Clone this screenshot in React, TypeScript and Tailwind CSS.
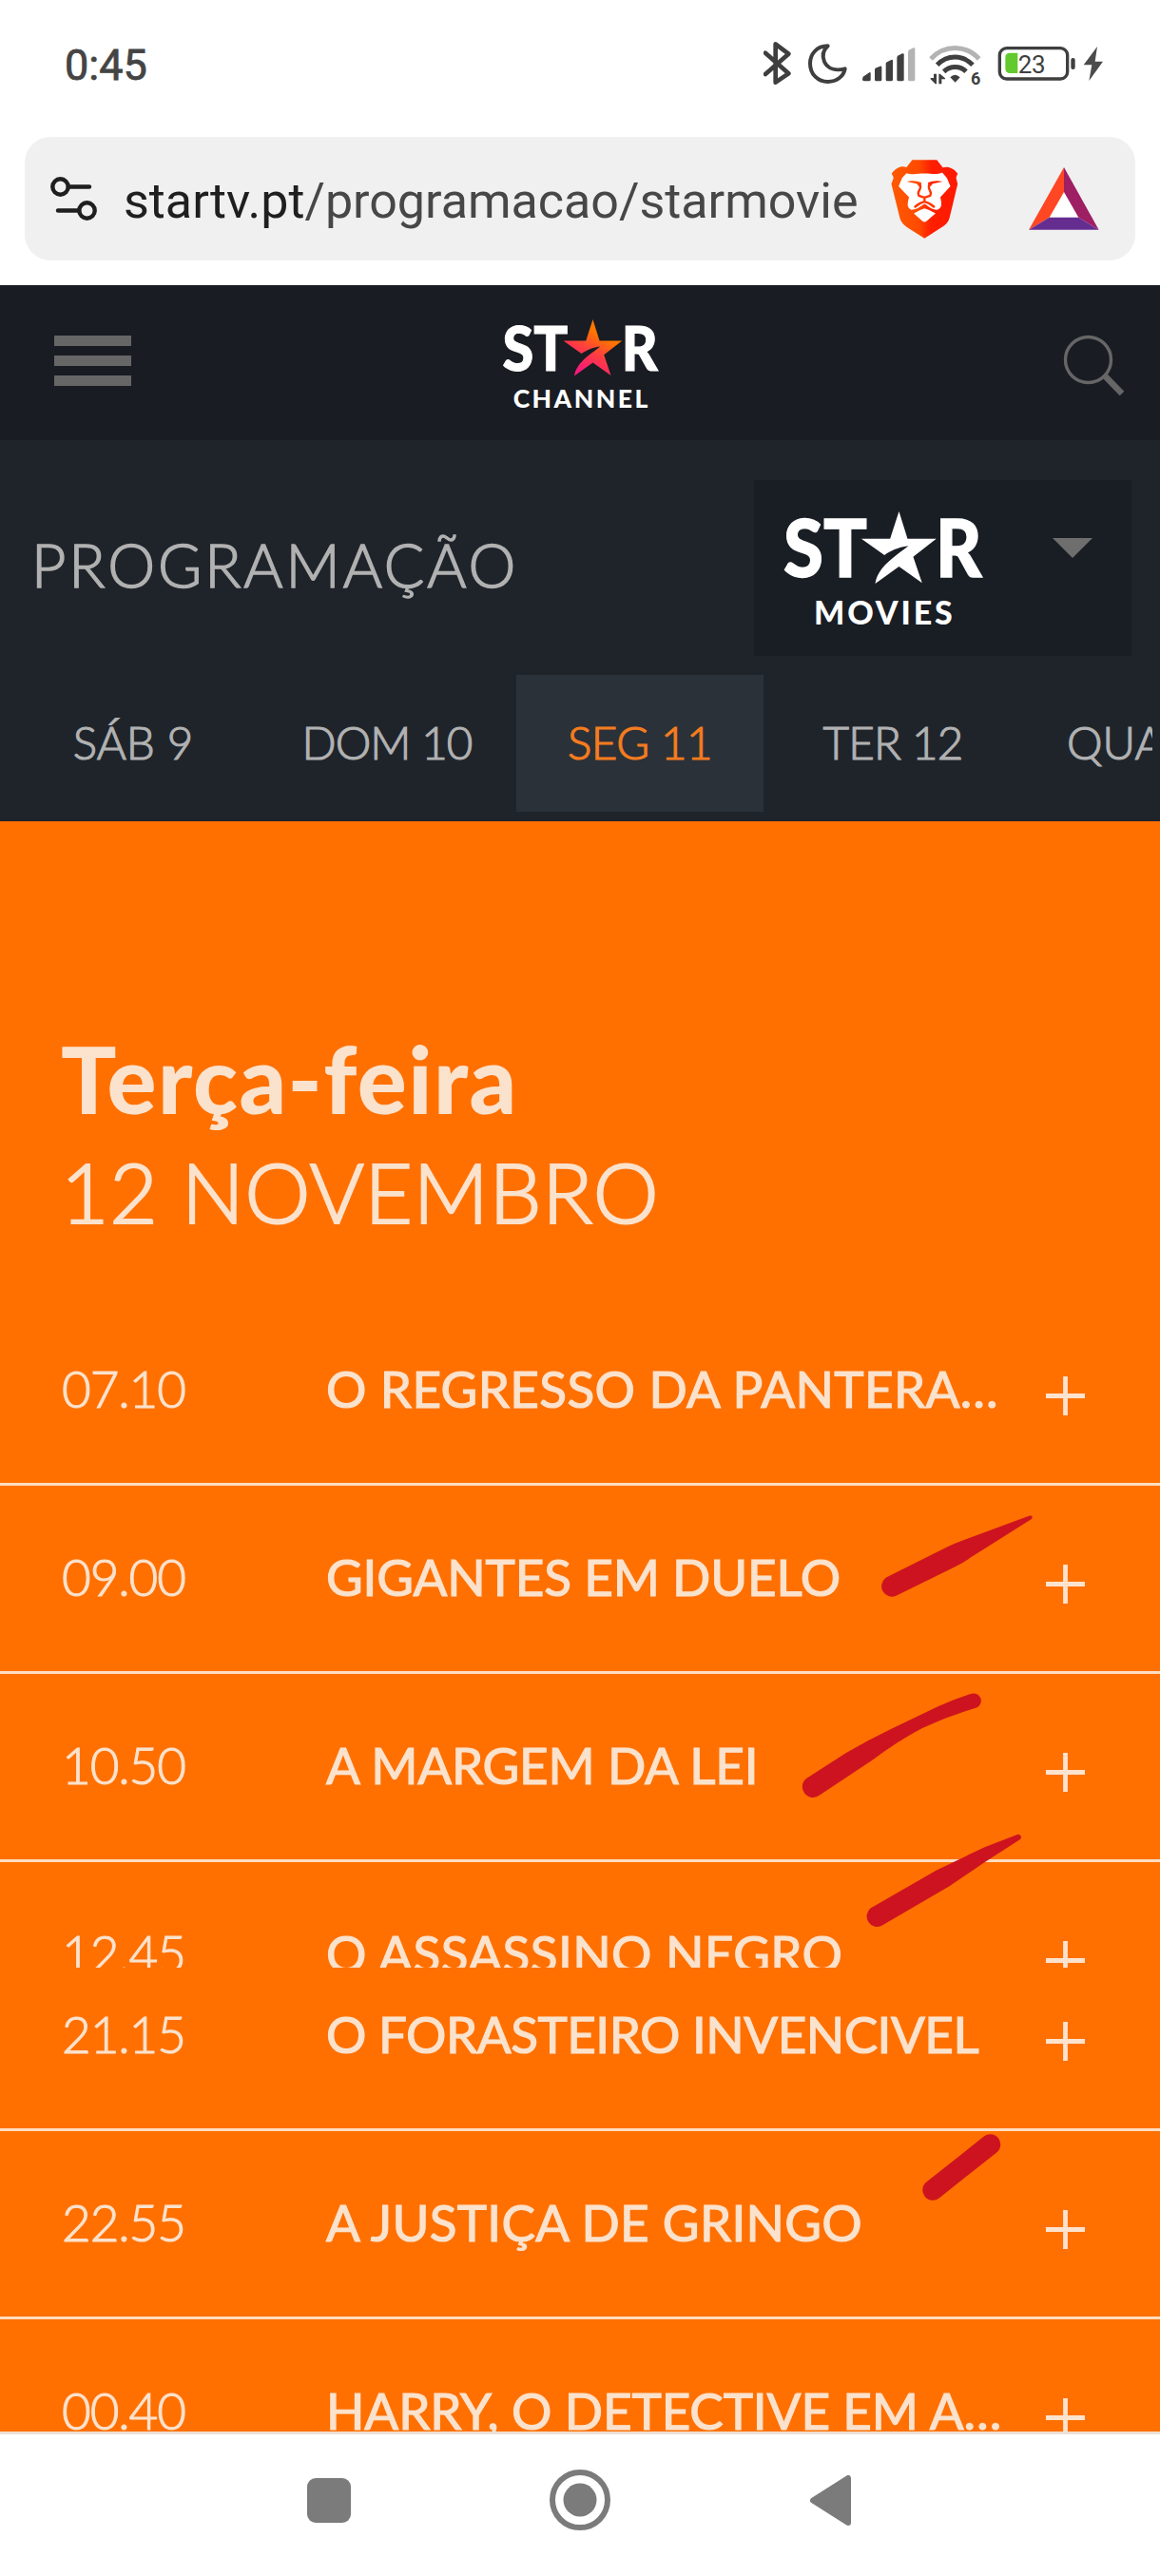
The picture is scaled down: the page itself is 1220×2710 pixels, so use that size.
import React from "react";

interface Day {
  label: string;
  className: string;
  active?: boolean;
}

interface Show {
  time: string;
  title: string;
  className: string;
}

const days: Day[] = [
  { label: "SÁB 9", className: "w-[240px] justify-center" },
  { label: "DOM 10", className: "ml-[11px] w-[272px] justify-center tracking-[-1px]" },
  { label: "SEG 11", className: "w-[260px] justify-center tracking-[-0.5px]", active: true },
  { label: "TER 12", className: "w-[272px] justify-center tracking-[-0.8px]" },
  { label: "QUA", className: "w-[137px] pl-[47px]" },
];

const morningShows: Show[] = [
  { time: "07.10", title: "O REGRESSO DA PANTERA…", className: "tracking-[0.4px]" },
  { time: "09.00", title: "GIGANTES EM DUELO", className: "tracking-[-0.15px]" },
  { time: "10.50", title: "A MARGEM DA LEI", className: "tracking-[-0.2px]" },
  { time: "12.45", title: "O ASSASSINO NEGRO", className: "tracking-[0.45px]" },
];

const nightShows: Show[] = [
  { time: "21.15", title: "O FORASTEIRO INVENCIVEL", className: "tracking-[-0.5px]" },
  { time: "22.55", title: "A JUSTIÇA DE GRINGO", className: "tracking-[0.3px]" },
  { time: "00.40", title: "HARRY, O DETECTIVE EM A…", className: "tracking-[-0.1px]" },
];

function StatusBar() {
  return (
    <div className="flex h-[144px] items-start justify-between pl-[68px] pr-[59px] text-[#444]">
      <span className="mt-[42px] font-['Roboto'] text-[45px] leading-[53px] [-webkit-text-stroke:0.8px]">
        0:45
      </span>

      <div className="mt-[44px] flex items-start">
        {/* Bluetooth */}
        <svg className="h-[45px] w-[29px]" viewBox="70 72 87 135" fill="none" stroke="#3f3f3f" strokeWidth="14" strokeLinejoin="round" strokeLinecap="round">
          <path d="M76 107 L149 172 L108 200 V79 L149 110 L76 174" />
        </svg>

        {/* Do not disturb */}
        <svg className="mt-[2px] ml-[18px] h-[42px] w-[41px]" viewBox="210 78 123 126" fill="none" stroke="#3f3f3f" strokeWidth="12" strokeLinejoin="round">
          <path d="M272 85 C236 85 216 112 216 140 C216 175 241 198 272 198 C301 198 322 180 326 157 C298 164 272 158 261 135 C253 116 258 98 272 85 Z" />
        </svg>

        {/* Signal */}
        <svg className="mt-[6px] ml-[16px] h-[36px] w-[56px]" viewBox="382 90 168 108" fill="#3f3f3f">
          <path d="M384 182 L405 168 Q408 168 408 171 V191 Q408 196 403 196 H387 Q382 196 382 190 Z" />
          <path d="M421 160 Q421 156 426 154 L438 149 Q443 148 443 153 V191 Q443 196 438 196 H426 Q421 196 421 191 Z" />
          <path d="M456 141 Q456 137 461 135 L473 129 Q478 127 478 132 V191 Q478 196 473 196 H461 Q456 196 456 191 Z" />
          <path d="M491 122 Q491 118 496 115 L508 109 Q513 107 513 112 V191 Q513 196 508 196 H496 Q491 196 491 191 Z" />
          <path fill="#b3b3b3" d="M526 104 Q526 100 531 97 L543 91 Q548 89 548 94 V191 Q548 196 543 196 H531 Q526 196 526 191 Z" />
        </svg>

        {/* Wifi */}
        <svg className="mt-[3px] ml-[14px] h-[42px] w-[56px] overflow-visible" viewBox="592 81 168 126" fill="none" strokeWidth="15">
          <path stroke="#b3b3b3" d="M598 126 C640 80 708 80 750 126" />
          <path stroke="#3f3f3f" d="M618 145 C650 112 698 112 730 145" />
          <path stroke="#3f3f3f" d="M639 166 C660 147 690 147 709 166" />
          <path fill="#3f3f3f" d="M659 184 Q674 169 690 184 L675 200 Z" />
          <path fill="#3f3f3f" d="M607 173 H616 V205 H612 L597 190 V186 H607 Z M623 205 V173 H627 L643 187 V190 H632 V205 Z" />
          <text x="724" y="206" fill="#3f3f3f" fontFamily="Roboto" fontWeight="700" fontSize="54">6</text>
        </svg>

        {/* Battery */}
        <svg className="mt-[4px] ml-[16px] h-[38px] w-[112px]" viewBox="806 84 336 114">
          <rect x="813" y="92" width="214" height="97" rx="22" fill="none" stroke="#3f3f3f" strokeWidth="10" />
          <path d="M846 107 H870 V171 H846 Q831 171 831 156 V122 Q831 107 846 107 Z" fill="#62c92e" />
          <text x="871" y="170" fill="#3f3f3f" fontFamily="Roboto" fontSize="78" textLength="87">23</text>
          <rect x="1038" y="123" width="13" height="36" rx="6" fill="#3f3f3f" />
          <path d="M1121 87 L1078 145 H1104 L1095 195 L1139 134 H1114 Z" fill="#4c4c4c" />
        </svg>
      </div>
    </div>
  );
}

function BraveIcon() {
  return (
    <svg className="h-[83px] w-[71px]" viewBox="471 443 213 250">
      <defs>
        <linearGradient id="brave" x1="0" x2="1" y1="0" y2="0">
          <stop offset="0" stopColor="#ff5a00" />
          <stop offset="0.42" stopColor="#ff4a00" />
          <stop offset="0.6" stopColor="#ff1f00" />
          <stop offset="1" stopColor="#ff1800" />
        </linearGradient>
      </defs>
      <path
        fill="url(#brave)"
        d="M538 444 H616 L635 468 C650 463 668 468 682 487 L677 500 L682 520 L656 628 C652 642 642 650 633 656 L577 692 L520 656 C508 647 502 638 499 628 L472 520 L479 500 L473 487 C488 466 505 462 520 467 Z"
      />
      <path
        fill="#fff"
        d="M520 486 C540 492 555 487 577 487 C600 487 615 492 633 484 L648 501 L659 527 L627 562 C634 588 630 598 616 602 C600 601 592 592 577 583 C562 592 552 601 536 602 C522 596 521 586 528 562 L495 527 L506 501 Z"
      />
      <path fill="#fff" d="M543 613 Q560 602 577 597 Q596 602 612 613 L584 637 Q577 643 570 637 Z" />
      {/* brows */}
      <path fill="#ff4a00" d="M520 512 Q545 507 567 515 L562 530 L552 519 Z" />
      <path fill="#ff1f00" d="M635 512 Q610 507 588 515 L593 530 L603 519 Z" />
      {/* nose and mouth */}
      <path
        fill="none"
        stroke="#ff3500"
        strokeWidth="7"
        strokeLinejoin="round"
        d="M562 518 Q567 530 560 541 Q555 548 559 557 L577 563 L595 557 Q599 548 594 541 Q588 530 593 518 M577 563 V577 M545 594 Q560 580 577 576 Q594 580 609 594"
      />
    </svg>
  );
}

function AddressBar() {
  return (
    <div className="mx-[26px] flex h-[130px] items-center rounded-[27px] bg-[#f0f0f0] pl-[27px]">
      <svg className="h-[46px] w-[49px] shrink-0" viewBox="0 0 49 46" fill="none" stroke="#1f1f1f" strokeWidth="4.4" strokeLinecap="round">
        <circle cx="10.5" cy="10.5" r="8.2" />
        <path d="M19 10.5 H41" />
        <circle cx="38.5" cy="35.5" r="8.2" />
        <path d="M8 35.5 H30" />
      </svg>
      <span className="mt-[6px] ml-[28px] w-[774px] font-['Roboto'] text-[52px] leading-[62px] whitespace-nowrap text-[#474747]">
        <span className="text-[#1f1f1f]">startv.pt</span>/programacao/starmovie
      </span>
      <div className="ml-[33px] flex items-center gap-[74px]">
        <BraveIcon />
        <svg className="h-[66px] w-[74px]" viewBox="905 468 222 198">
          <path fill="#fff" d="M1016 540 L1066 630 H966 Z" />
          <path fill="#ff4724" d="M1016 468 V546 L970 626 L905 665 Z" />
          <path fill="#9e1f63" d="M1016 468 V546 L1062 626 L1126 665 Z" />
          <path fill="#662d91" d="M905 665 L970 626 H1062 L1126 665 Z" />
        </svg>
      </div>
    </div>
  );
}

interface StarLogoProps {
  label: string;
  labelX: number;
  labelWidth: number;
  starFill: string;
  className: string;
}

function StarLogo({ label, labelX, labelWidth, starFill, className }: StarLogoProps) {
  return (
    <svg className={className} viewBox="137 113 622 360" fill="#fff" fontFamily="Lato" overflow="visible">
      <defs>
        <linearGradient id="star-gradient" gradientUnits="userSpaceOnUse" x1="440" y1="320" x2="535" y2="150">
          <stop offset="0" stopColor="#f5197a" />
          <stop offset="0.45" stopColor="#ff3b43" />
          <stop offset="0.85" stopColor="#ff7500" />
        </linearGradient>
      </defs>
      <g fontWeight="900" fontSize="252" stroke="#fff" strokeWidth="4">
        <text x="131" y="321" textLength="264" lengthAdjust="spacingAndGlyphs">ST</text>
        <text x="612" y="321" textLength="146" lengthAdjust="spacingAndGlyphs">R</text>
      </g>
      <path
        fill={starFill}
        d="M496 113 L523 199 H614 L541 256 L569 339 L496 287 L421 341 C430 288 480 258 526 222 C490 227 470 238 450 251 L377 199 H468 Z"
      />
      <text x={labelX} y="470" fontWeight="900" fontSize="102" textLength={labelWidth}>{label}</text>
    </svg>
  );
}

function SiteHeader() {
  return (
    <header className="mt-[26px] flex h-[163px] items-start justify-between bg-[#191c22] pr-[36px] pl-[57px]">
      <button className="mt-[53px] flex w-[81px] flex-col gap-[10px]">
        <span className="h-[11px] bg-[#666]" />
        <span className="h-[11px] bg-[#666]" />
        <span className="h-[11px] bg-[#666]" />
      </button>
      <StarLogo
        label="CHANNEL"
        labelX={174}
        labelWidth={544}
        starFill="url(#star-gradient)"
        className="mt-[36px] mr-[35px] h-[94px] w-[162px]"
      />
      <svg className="mt-[51px] h-[68px] w-[66px]" viewBox="0 0 66 68" fill="none" stroke="#666">
        <circle cx="26.5" cy="27.5" r="24" strokeWidth="3.4" />
        <path d="M44.5 45 L62 63" strokeWidth="6.5" />
      </svg>
    </header>
  );
}

function Programming() {
  return (
    <section className="h-[401px] bg-[#1f242b] font-['Lato'] font-light text-[#b1b1b1]">
      <div className="flex items-start justify-between pt-[42px] pr-[30px] pl-[33px]">
        <h1 className="mt-[51px] text-[63px] leading-[76px] tracking-[2.9px] [-webkit-text-stroke:1.5px]">PROGRAMAÇÃO</h1>
        <div className="flex h-[185px] w-[397px] items-start bg-[#191d24] pt-[33px] pl-[33px]">
          <StarLogo label="MOVIES" labelX={227} labelWidth={438} starFill="#fff" className="h-[120px] w-[207px]" />
          <svg className="mt-[28px] ml-[74px] h-[21px] w-[42px]" viewBox="0 0 42 21" fill="#6e6e6e">
            <path d="M0 0 H42 L21 21 Z" />
          </svg>
        </div>
      </div>

      <nav className="mt-[20px] mr-2 ml-[20px] flex h-[144px] overflow-hidden text-[47.5px] whitespace-nowrap [-webkit-text-stroke:1.2px]">
        {days.map((day) => (
          <a
            key={day.label}
            className={`flex shrink-0 items-center pb-[2px] ${day.className} ${day.active ? "bg-[#2b3138] text-[#f57c1f]" : ""}`}
          >
            {day.label}
          </a>
        ))}
      </nav>
    </section>
  );
}

function ShowRow({ show }: { show: Show }) {
  return (
    <li className="flex h-[198px] shrink-0 items-start border-b-3 border-[#ffddc0] pt-[66px] pl-[65px] text-[53px] leading-[60px] whitespace-nowrap">
      <span className="w-[278px] font-light tracking-[-1.1px] [-webkit-text-stroke:1.1px]">{show.time}</span>
      <span className={`w-[757px] font-normal [-webkit-text-stroke:1.2px] ${show.className}`}>{show.title}</span>
      <svg className="mt-[17px] h-[41px] w-[41px]" viewBox="0 0 41 41" stroke="#fde3ce" strokeWidth="4.8">
        <path d="M0 20.5 H41 M20.5 0 V41" />
      </svg>
    </li>
  );
}

// Hand drawn strokes beside the marked titles
function Marks() {
  return (
    <svg className="absolute top-0 left-0 h-[1694px] w-[1220px]" viewBox="0 864 1220 1694" fill="#cd1320">
      <path d="M932 1659.5 L995 1628 Q1004 1623.5 1014 1620 L1083 1594.5 Q1087 1594 1085 1598 L1020 1639 Q1015 1643 1005 1648 L943 1678.5 A11 11 0 0 1 932 1659.5 Z" />
      <path d="M848 1871 L890 1844 Q912 1831 937 1819 L987 1795 Q1004 1787 1021 1782 A7.5 7.5 0 0 1 1027 1796.5 Q998 1805 970 1818 Q945 1831 917 1852 L862 1888.5 A11 11 0 0 1 848 1871 Z" />
      <path d="M915.5 2007.5 L985 1967.5 L1035 1943.5 L1070 1930 A3 3 0 0 1 1073 1935 L1035 1959.5 L999 1984 L927 2026 A11 11 0 0 1 915.5 2007.5 Z" />
      <path d="M981 2304 L1041.5 2256" stroke="#cd1320" strokeWidth="21.5" strokeLinecap="round" />
    </svg>
  );
}

function Schedule() {
  return (
    <main className="relative h-[1697px] overflow-hidden border-b-3 border-[#eee0d4] bg-[#ff7000] font-['Lato'] text-[#fbe2cd]">
      <div className="h-[501px] pt-[212px] pl-[64px]">
        <h2 className="text-[97px] leading-[118px] font-black tracking-[1.5px]">Terça-feira</h2>
        <p className="text-[87px] leading-[120px] font-light tracking-[0.8px] [-webkit-text-stroke:2.2px]">12 NOVEMBRO</p>
      </div>
      <ul className="flex h-[705px] flex-col overflow-hidden">
        {morningShows.map((show) => (
          <ShowRow key={show.time} show={show} />
        ))}
      </ul>
      <ul className="flex h-[488px] flex-col justify-start overflow-hidden">
        <li className="-mt-[26px]" />
        {nightShows.map((show) => (
          <ShowRow key={show.time} show={show} />
        ))}
      </ul>
      <Marks />
    </main>
  );
}

function SystemNav() {
  return (
    <div className="flex h-[149px] items-start bg-white pt-[37px] pl-[323px]">
      <span className="mt-[9px] h-[47px] w-[46px] rounded-[9px] bg-[#7b7b7b]" />
      <svg className="ml-[209px] h-[64px] w-[64px]" viewBox="0 0 64 64" fill="#7b7b7b">
        <circle cx="32" cy="32" r="29" fill="none" stroke="#7b7b7b" strokeWidth="6" />
        <circle cx="32" cy="32" r="17.5" />
      </svg>
      <svg className="mt-[6px] ml-[210px] h-[53px] w-[43px]" viewBox="0 0 43 53" fill="#7b7b7b" stroke="#7b7b7b" strokeWidth="6" strokeLinejoin="round">
        <path d="M3 26.5 L40 3 V50 Z" />
      </svg>
    </div>
  );
}

export default function App() {
  return (
    <div className="flex h-[2710px] w-[1220px] flex-col overflow-hidden bg-white">
      <StatusBar />
      <AddressBar />
      <SiteHeader />
      <Programming />
      <Schedule />
      <SystemNav />
    </div>
  );
}
